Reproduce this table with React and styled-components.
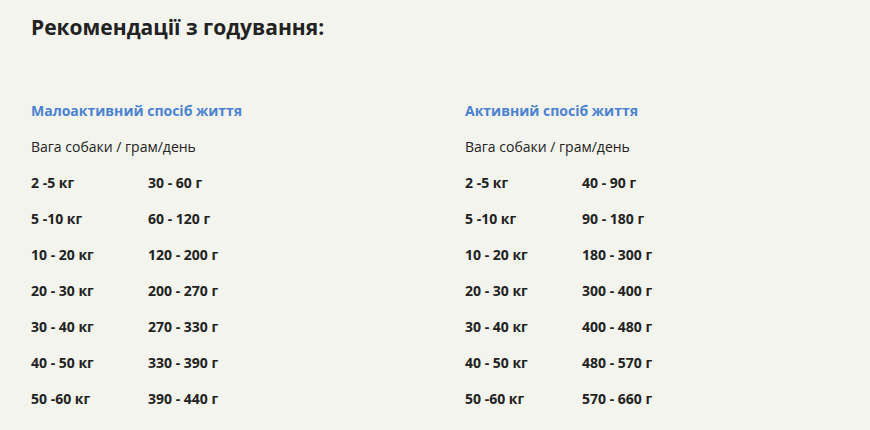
import styled, { createGlobalStyle } from "styled-components";

const GlobalStyle = createGlobalStyle`
  body {
    margin: 0;
    background: #f4f4ee;
    font-family: "Open Sans", "Liberation Sans", sans-serif;
    color: #222;
  }
`;

const plans = [
  {
    title: "Малоактивний спосіб життя",
    rows: [
      ["2 -5 кг", "30 - 60 г"],
      ["5 -10 кг", "60 - 120 г"],
      ["10 - 20 кг", "120 - 200 г"],
      ["20 - 30 кг", "200 - 270 г"],
      ["30 - 40 кг", "270 - 330 г"],
      ["40 - 50 кг", "330 - 390 г"],
      ["50 -60 кг", "390 - 440 г"],
    ],
  },
  {
    title: "Активний спосіб життя",
    rows: [
      ["2 -5 кг", "40 - 90 г"],
      ["5 -10 кг", "90 - 180 г"],
      ["10 - 20 кг", "180 - 300 г"],
      ["20 - 30 кг", "300 - 400 г"],
      ["30 - 40 кг", "400 - 480 г"],
      ["40 - 50 кг", "480 - 570 г"],
      ["50 -60 кг", "570 - 660 г"],
    ],
  },
];

export default function App() {
  return (
    <Page>
      <GlobalStyle />
      <Title>Рекомендації з годування:</Title>
      <Columns>
        {plans.map((plan) => (
          <Plan key={plan.title}>
            <PlanTitle>{plan.title}</PlanTitle>
            <Caption>Вага собаки / грам/день</Caption>
            {plan.rows.map(([weight, grams]) => (
              <Row key={weight}>
                <Cell>{weight}</Cell>
                <Cell>{grams}</Cell>
              </Row>
            ))}
          </Plan>
        ))}
      </Columns>
    </Page>
  );
}

const Page = styled.div`
  width: 870px;
  height: 430px;
  box-sizing: border-box;
  padding: 12px 0 0 31px;
  overflow: hidden;
`;

const Title = styled.h2`
  margin: 0;
  font-size: 21px;
  line-height: 30px;
  font-weight: 700;
  color: #222;
`;

const Columns = styled.div`
  display: grid;
  grid-template-columns: 434px 1fr;
  margin-top: 54px;
`;

const Plan = styled.div`
  display: flex;
  flex-direction: column;
`;

const PlanTitle = styled.h3`
  margin: 0;
  font-size: 14px;
  line-height: 30px;
  font-weight: 700;
  color: #4a82d0;
`;

const Caption = styled.div`
  font-size: 14px;
  line-height: 36px;
  margin-top: 3px;
`;

const Row = styled.div`
  display: grid;
  grid-template-columns: 117px 1fr;
  font-size: 14px;
  line-height: 36px;
  font-weight: 700;
`;

const Cell = styled.span``;
